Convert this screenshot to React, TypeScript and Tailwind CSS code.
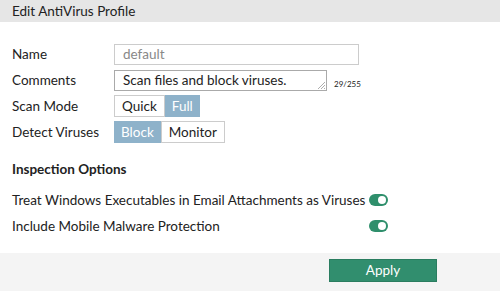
import React from "react";

const font = { fontFamily: "Lato, 'Open Sans', sans-serif" };

function Toggle() {
  return (
    <div className="relative w-[19px] h-[12px] rounded-full bg-[#2f8f6c]">
      <div className="absolute right-[2px] top-[2px] w-[8px] h-[8px] rounded-full bg-white" />
    </div>
  );
}

export default function App() {
  return (
    <div className="w-[500px] h-[291px] bg-white flex flex-col text-[13.5px] text-[#222]" style={font}>
      <div className="h-[22px] bg-[#e6e6e6] pl-3 leading-[22px] text-[13.5px] text-[#222]">Edit AntiVirus Profile</div>
      <div className="flex-1 flex flex-col pl-3 pt-[22px]">
        <div className="flex items-center h-[21px]">
          <div className="w-[102px]">Name</div>
          <div className="w-[245px] h-[21px] border border-[#cccccc] pl-2 leading-[19px] text-[#888]">default</div>
        </div>
        <div className="flex items-center h-[21px] mt-[5px]">
          <div className="w-[102px]">Comments</div>
          <div className="relative w-[213px] h-[21px] border border-[#aaaaaa] pl-2 leading-[19px] whitespace-nowrap">
            Scan files and block viruses.
            <svg className="absolute right-[1px] bottom-[1px]" width="8" height="8" viewBox="0 0 8 8">
              <path d="M8 1 L1 8 M8 4 L4 8 M8 7 L7 8" stroke="#999" strokeWidth="0.8" />
            </svg>
          </div>
          <div className="ml-[7px] self-end text-[8px] leading-[12px] mb-[1px]">29/255</div>
        </div>
        <div className="flex items-center h-[22px] mt-[4px]">
          <div className="w-[102px]">Scan Mode</div>
          <div className="flex h-[22px]">
            <div className="h-full px-[7px] border border-[#cccccc] leading-[20px] bg-white">Quick</div>
            <div className="h-full px-[7px] bg-[#8eb2ca] text-white leading-[22px]">Full</div>
          </div>
        </div>
        <div className="flex items-center h-[22px] mt-[4px]">
          <div className="w-[102px]">Detect Viruses</div>
          <div className="flex h-[22px]">
            <div className="h-full px-[7px] bg-[#8eb2ca] text-white leading-[22px]">Block</div>
            <div className="h-full px-[7px] border border-[#cccccc] leading-[20px] bg-white">Monitor</div>
          </div>
        </div>
        <div className="font-bold mt-[18px] leading-[16px]">Inspection Options</div>
        <div className="flex items-center w-[376px] justify-between mt-[15px] h-[16px]">
          <div>Treat Windows Executables in Email Attachments as Viruses</div>
          <Toggle />
        </div>
        <div className="flex items-center w-[376px] justify-between mt-[10px] h-[16px]">
          <div>Include Mobile Malware Protection</div>
          <Toggle />
        </div>
      </div>
      <div className="h-[38px] bg-[#f4f4f4] flex items-start pt-[6px] pl-[329px]">
        <div className="w-[108px] h-[23px] bg-[#318e6e] border border-[#2a7d60] text-white text-[13.5px] leading-[21px] text-center">Apply</div>
      </div>
    </div>
  );
}
